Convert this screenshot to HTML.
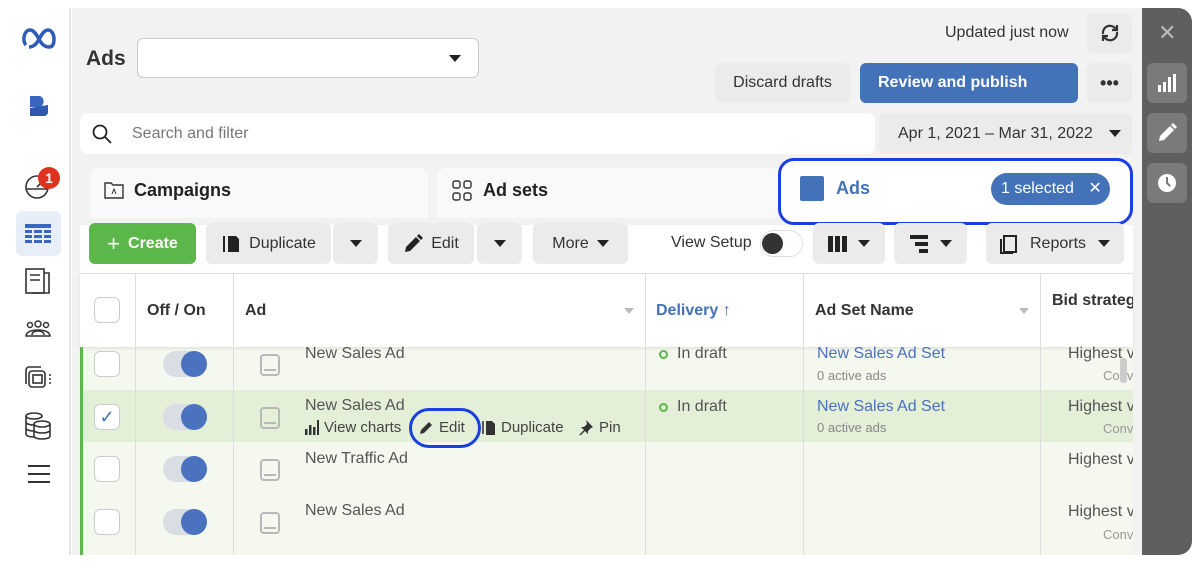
<!DOCTYPE html>
<html><head><style>
*{box-sizing:border-box;margin:0;padding:0}
body{width:1200px;height:572px;background:#fff;font-family:"Liberation Sans",sans-serif;color:#1c1e21;position:relative;overflow:hidden;font-size:15px}
.a{position:absolute;white-space:nowrap}
.btn{position:absolute;background:#ebebeb;border-radius:6px;display:flex;align-items:center;justify-content:center;font-size:16px;color:#333;white-space:nowrap}
.tri{display:inline-block;width:0;height:0;border-left:6px solid transparent;border-right:6px solid transparent;border-top:7px solid #222}
.cb{position:absolute;left:94px;width:26px;height:26px;border:1px solid #ccc;border-radius:6px;background:#fff}
.tg{position:absolute;left:163px;width:44px;height:26px;border-radius:13px;background:#d8dee3}
.tg:after{content:"";position:absolute;right:0;top:0;width:26px;height:26px;border-radius:50%;background:#4a72bf}
.ph{position:absolute;left:260px;width:20px;height:22px;border:2px solid #b8b8b8;border-radius:4px}
.ph:after{content:"";position:absolute;left:2px;right:2px;bottom:3px;height:2px;background:#b8b8b8}
.t{position:absolute;font-size:16px;color:#555;white-space:nowrap}
.lk{position:absolute;font-size:16px;color:#4a72bf;white-space:nowrap}
.sm{position:absolute;font-size:13px;color:#888;white-space:nowrap}
.vl{position:absolute;width:1px;background:#ddd}
</style></head><body>
<div class="a" style="left:10px;top:8px;width:61px;height:547px;background:#fff;border-right:2px solid #e4e4e4"></div>
<svg class="a" style="left:22px;top:27px" width="34" height="22" viewBox="0 0 34 22"><path d="M4 18C0 14 2 3 8 3c5 0 8 8 10 11 3 5 6 6 9 6 4 0 5-4 5-8S30 3 26 3c-5 0-8 8-10 11-3 5-6 6-9 6" fill="none" stroke="#2e5bb8" stroke-width="3.5"/></svg>
<svg class="a" style="left:27px;top:94px" width="24" height="24"><path d="M3 2h10a6 6 0 0 1 0 11H3z" fill="#3a66c0"/><path d="M3 14l18-3v7a4 4 0 0 1-4 4H3z" fill="#2f58b0"/></svg>
<svg class="a" style="left:24px;top:172px" width="26" height="28" fill="none" stroke="#333" stroke-width="1.6"><circle cx="13" cy="15" r="11"/><path d="M3 17h20M13 15l5-5"/></svg>
<div class="a" style="left:38px;top:167px;width:22px;height:22px;border-radius:50%;background:#e0301e;color:#fff;font-size:14px;font-weight:bold;text-align:center;line-height:22px">1</div>
<div class="a" style="left:16px;top:211px;width:45px;height:45px;border-radius:6px;background:#e8eef8"></div>
<svg class="a" style="left:25px;top:224px" width="26" height="20" fill="#3a66c0"><rect x="0" y="0" width="26" height="4"/><rect x="0" y="6" width="7" height="3"/><rect x="9" y="6" width="8" height="3"/><rect x="19" y="6" width="7" height="3"/><rect x="0" y="11" width="7" height="3"/><rect x="9" y="11" width="8" height="3"/><rect x="19" y="11" width="7" height="3"/><rect x="0" y="16" width="7" height="3"/><rect x="9" y="16" width="8" height="3"/><rect x="19" y="16" width="7" height="3"/></svg>
<svg class="a" style="left:24px;top:267px" width="28" height="28" fill="none" stroke="#333" stroke-width="1.6"><rect x="2" y="2" width="18" height="24"/><path d="M6 8h10M6 13h10M20 6h5v20H8"/></svg>
<svg class="a" style="left:23px;top:318px" width="30" height="22" fill="none" stroke="#333" stroke-width="1.5"><circle cx="15" cy="6" r="3"/><circle cx="7" cy="7" r="2.5"/><circle cx="23" cy="7" r="2.5"/><path d="M3 18c0-5 8-6 12-6s12 1 12 6zM9 17c0-3 3-4 6-4s6 1 6 4"/></svg>
<svg class="a" style="left:23px;top:364px" width="30" height="28" fill="none" stroke="#333" stroke-width="1.6"><rect x="6" y="7" width="16" height="16" rx="3"/><rect x="10" y="11" width="9" height="8"/><path d="M3 20V6a3 3 0 0 1 3-3h12M26 11h2M26 15h2M26 19h2"/></svg>
<svg class="a" style="left:24px;top:412px" width="28" height="28" fill="none" stroke="#333" stroke-width="1.6"><ellipse cx="10" cy="4" rx="8" ry="3"/><path d="M2 4v18c0 2 4 3 8 3M2 10c0 2 4 3 8 3M2 16c0 2 4 3 8 3"/><ellipse cx="18" cy="12" rx="8" ry="3"/><path d="M10 12v12c0 2 4 3 8 3s8-1 8-3V12M10 18c0 2 4 3 8 3s8-1 8-3"/></svg>
<div class="a" style="left:28px;top:465px;width:22px;height:2px;background:#333;box-shadow:0 8px 0 #333,0 16px 0 #333"></div>
<div class="a" style="left:72px;top:8px;width:1070px;height:547px;background:#f2f2f2"></div>
<div class="a" style="left:1142px;top:8px;width:50px;height:547px;background:#5f5f5f;border-radius:0 14px 14px 0"></div>
<div class="a" style="left:1158px;top:20px;color:#bbb;font-size:22px">✕</div>
<div class="a" style="left:1147px;top:63px;width:40px;height:40px;border-radius:6px;background:#7a7a7a"></div>
<svg class="a" style="left:1157px;top:73px" width="20" height="20" fill="#fff"><rect x="1" y="12" width="3" height="7"/><rect x="6" y="9" width="3" height="10"/><rect x="11" y="4" width="3" height="15"/><rect x="16" y="1" width="3" height="18"/></svg>
<div class="a" style="left:1147px;top:113px;width:40px;height:40px;border-radius:6px;background:#7a7a7a"></div>
<svg class="a" style="left:1157px;top:123px" width="20" height="20" fill="#fff"><path d="M2 18l1-5L13 3l4 4L7 17z"/><path d="M14 2l2-2 4 4-2 2z"/></svg>
<div class="a" style="left:1147px;top:163px;width:40px;height:40px;border-radius:6px;background:#7a7a7a"></div>
<svg class="a" style="left:1157px;top:173px" width="20" height="20"><circle cx="10" cy="10" r="9" fill="#fff"/><path d="M10 4v6l3 3" stroke="#7a7a7a" stroke-width="2" fill="none"/></svg>
<div class="a" style="left:86px;top:47px;font-size:21px;font-weight:bold;color:#333">Ads</div>
<div class="a" style="left:137px;top:38px;width:342px;height:40px;background:#fff;border:1px solid #ccc;border-radius:6px"></div>
<div class="a tri" style="left:449px;top:55px"></div>
<div class="a" style="left:945px;top:24px;font-size:16px;color:#333">Updated just now</div>
<div class="btn" style="left:1087px;top:13px;width:45px;height:40px"><svg width="22" height="22" fill="none" stroke="#333" stroke-width="2.2"><path d="M4 12a7 7 0 0 1 12-6l2 2M18 10a7 7 0 0 1-12 6l-2-2"/><path d="M18 3v5h-5M4 19v-5h5"/></svg></div>
<div class="btn" style="left:715px;top:63px;width:135px;height:40px">Discard drafts</div>
<div class="btn" style="left:860px;top:63px;width:218px;height:40px;background:#4472b8;color:#fff;font-weight:bold;justify-content:flex-start;padding-left:18px">Review and publish</div>
<div class="btn" style="left:1087px;top:63px;width:45px;height:40px;font-weight:bold;font-size:18px">•••</div>
<div class="a" style="left:80px;top:113px;width:795px;height:41px;background:#fff;border-radius:8px"></div>
<svg class="a" style="left:92px;top:124px" width="20" height="20" fill="none" stroke="#222" stroke-width="1.8"><circle cx="8" cy="8" r="6.5"/><path d="M13 13l6 6"/></svg>
<div class="a" style="left:132px;top:125px;font-size:16px;color:#777">Search and filter</div>
<div class="btn" style="left:879px;top:113px;width:253px;height:41px;justify-content:flex-start;padding-left:19px">Apr 1, 2021 – Mar 31, 2022<span class="tri" style="margin-left:16px"></span></div>
<div class="a" style="left:90px;top:168px;width:338px;height:50px;background:#f8f9fb;border-radius:8px 8px 0 0"></div>
<svg class="a" style="left:104px;top:181px" width="20" height="18" fill="none" stroke="#333" stroke-width="1.4"><path d="M1 2h6l2 2h10v13H1z"/><path d="M8 13l2-5 2 5" stroke-width="1"/></svg>
<div class="a" style="left:134px;top:180px;font-size:18px;font-weight:bold;color:#222">Campaigns</div>
<div class="a" style="left:437px;top:168px;width:350px;height:50px;background:#f8f9fb;border-radius:8px 8px 0 0"></div>
<svg class="a" style="left:452px;top:180px" width="20" height="22" fill="none" stroke="#333" stroke-width="1.4"><rect x="1" y="1" width="7" height="7" rx="2"/><rect x="12" y="1" width="7" height="7" rx="2"/><rect x="1" y="13" width="7" height="7" rx="2"/><rect x="12" y="13" width="7" height="7" rx="2"/></svg>
<div class="a" style="left:483px;top:180px;font-size:18px;font-weight:bold;color:#222">Ad sets</div>
<div class="a" style="left:778px;top:158px;width:355px;height:67px;background:#fff;border:3px solid #1a3fe0;border-radius:16px"></div>
<div class="a" style="left:800px;top:176px;width:24px;height:25px;background:#4472b8;border-radius:2px"></div>
<div class="a" style="left:836px;top:178px;font-size:18px;font-weight:bold;color:#4472b8">Ads</div>
<div class="a" style="left:991px;top:173px;width:119px;height:32px;border-radius:16px;background:#4472b8;color:#fff;font-size:16px;line-height:32px;padding-left:10px">1 selected <span style="margin-left:10px">✕</span></div>
<div class="a" style="left:80px;top:225px;width:1053px;height:48px;background:#fff"></div>
<div class="btn" style="left:89px;top:223px;width:107px;height:41px;background:#5bb74a;color:#fff;font-weight:bold"><span style="font-size:22px;font-weight:normal;margin-right:8px">+</span>Create</div>
<div class="btn" style="left:206px;top:223px;width:125px;height:41px"><svg width="20" height="20" style="margin-right:8px"><path d="M3 2v16" stroke="#222" stroke-width="2" fill="none"/><path d="M7 2h8l3 3v13H7z" fill="#222"/></svg>Duplicate</div>
<div class="btn" style="left:333px;top:223px;width:45px;height:41px"><span class="tri"></span></div>
<div class="btn" style="left:388px;top:223px;width:86px;height:41px"><svg width="20" height="20" style="margin-right:8px" fill="#222"><path d="M2 18l1-5L13 3l4 4L7 17z"/><path d="M14 2l2-2 4 4-2 2z"/></svg>Edit</div>
<div class="btn" style="left:477px;top:223px;width:45px;height:41px"><span class="tri"></span></div>
<div class="btn" style="left:533px;top:223px;width:95px;height:41px">More<span class="tri" style="margin-left:8px"></span></div>
<div class="a" style="left:671px;top:234px;font-size:16px;color:#333">View Setup</div>
<div class="a" style="left:760px;top:230px;width:43px;height:27px;border-radius:14px;border:1px solid #ddd;background:#fff"></div>
<div class="a" style="left:762px;top:233px;width:21px;height:21px;border-radius:50%;background:#333"></div>
<div class="btn" style="left:813px;top:223px;width:72px;height:41px"><svg width="20" height="16" style="margin-right:10px" fill="#222"><rect x="0" width="5" height="16"/><rect x="7" width="5" height="16"/><rect x="14" width="5" height="16"/></svg><span class="tri"></span></div>
<div class="btn" style="left:894px;top:223px;width:73px;height:41px"><svg width="20" height="18" style="margin-right:10px" fill="#222"><rect x="0" width="18" height="4"/><rect x="5" y="7" width="13" height="4"/><rect x="9" y="14" width="9" height="4"/></svg><span class="tri"></span></div>
<div class="btn" style="left:986px;top:223px;width:138px;height:41px"><svg width="20" height="20" style="margin-right:10px" fill="none" stroke="#222" stroke-width="2"><rect x="4" y="2" width="12" height="16"/><path d="M1 5v14h12"/></svg>Reports<span class="tri" style="margin-left:12px"></span></div>
<div class="a" style="left:80px;top:273px;width:1053px;height:282px;background:#f5f8ee"></div>
<div class="a" style="left:80px;top:273px;width:1053px;height:74px;background:#fff;border-top:1px solid #ddd;box-shadow:0 2px 3px rgba(0,0,0,.08)"></div>
<div class="a" style="left:80px;top:390px;width:1053px;height:52px;background:#e3efd6"></div>
<div class="a" style="left:80px;top:347px;width:3px;height:208px;background:#5bb74a"></div>
<div class="vl" style="left:135px;top:273px;height:282px"></div>
<div class="vl" style="left:233px;top:273px;height:282px"></div>
<div class="vl" style="left:645px;top:273px;height:282px"></div>
<div class="vl" style="left:803px;top:273px;height:282px"></div>
<div class="vl" style="left:1040px;top:273px;height:282px"></div>
<div class="cb" style="top:297px"></div>
<div class="a" style="left:147px;top:302px;font-size:16px;font-weight:bold;color:#333">Off / On</div>
<div class="a" style="left:245px;top:302px;font-size:16px;font-weight:bold;color:#333">Ad</div>
<div class="a tri" style="left:624px;top:308px;border-top-color:#bbb;border-width:6px 5px 0"></div>
<div class="a" style="left:656px;top:302px;font-size:16px;font-weight:bold;color:#4472b8">Delivery ↑</div>
<div class="a" style="left:815px;top:302px;font-size:16px;font-weight:bold;color:#333">Ad Set Name</div>
<div class="a tri" style="left:1019px;top:308px;border-top-color:#bbb;border-width:6px 5px 0"></div>
<div class="a" style="left:1052px;top:292px;font-size:16px;font-weight:bold;color:#333;width:81px;overflow:hidden">Bid strategy</div>
<div class="cb" style="top:351px"></div><div class="tg" style="top:351px"></div><div class="ph" style="top:354px"></div>
<div class="t" style="left:305px;top:345px">New Sales Ad</div>
<div class="cb" style="top:404px;color:#4472b8;font-size:18px;text-align:center;line-height:24px">✓</div><div class="tg" style="top:404px"></div><div class="ph" style="top:407px"></div>
<div class="t" style="left:305px;top:397px">New Sales Ad</div>
<svg class="a" style="left:305px;top:420px" width="14" height="15" fill="#333"><rect x="0" y="9" width="2.5" height="6"/><rect x="4" y="5" width="2.5" height="10"/><rect x="8" y="7" width="2.5" height="8"/><rect x="12" y="0" width="2.5" height="15"/></svg>
<div class="a" style="left:324px;top:419px;font-size:15px;color:#444">View charts</div>
<div class="a" style="left:409px;top:408px;width:72px;height:40px;border:3px solid #1a3fe0;border-radius:20px"></div>
<svg class="a" style="left:419px;top:420px" width="15" height="15" fill="#333"><path d="M1 14l1-4L10 2l3 3-8 8z"/></svg>
<div class="a" style="left:439px;top:419px;font-size:15px;color:#444">Edit</div>
<svg class="a" style="left:482px;top:420px" width="14" height="15" fill="#333"><path d="M1 1v13" stroke="#333" stroke-width="1.6"/><path d="M4 1h6l3 3v11H4z"/></svg>
<div class="a" style="left:501px;top:419px;font-size:15px;color:#444">Duplicate</div>
<svg class="a" style="left:578px;top:420px" width="15" height="15" fill="#333"><path d="M8 0l7 7-2 1-3 3 0 3-3-3-5 5-1-1 5-5-3-3h3l3-3z"/></svg>
<div class="a" style="left:599px;top:419px;font-size:15px;color:#444">Pin</div>
<div class="cb" style="top:456px"></div><div class="tg" style="top:456px"></div><div class="ph" style="top:459px"></div>
<div class="t" style="left:305px;top:450px">New Traffic Ad</div>
<div class="cb" style="top:509px"></div><div class="tg" style="top:509px"></div><div class="ph" style="top:512px"></div>
<div class="t" style="left:305px;top:502px">New Sales Ad</div>
<div class="a" style="left:659px;top:350px;width:9px;height:9px;border:2px solid #5bb74a;border-radius:50%"></div>
<div class="t" style="left:677px;top:345px">In draft</div>
<div class="a" style="left:659px;top:403px;width:9px;height:9px;border:2px solid #5bb74a;border-radius:50%"></div>
<div class="t" style="left:677px;top:398px">In draft</div>
<div class="lk" style="left:817px;top:345px">New Sales Ad Set</div><div class="sm" style="left:817px;top:368px">0 active ads</div>
<div class="lk" style="left:817px;top:398px">New Sales Ad Set</div><div class="sm" style="left:817px;top:420px">0 active ads</div>
<div class="a" style="left:1068px;top:345px;width:65px;height:210px;overflow:hidden;font-size:16px;color:#555">
<div class="a" style="left:0;top:0">Highest v</div><div class="a" style="left:35px;top:23px;font-size:13px;color:#999">Conv</div>
<div class="a" style="left:0;top:53px">Highest v</div><div class="a" style="left:35px;top:76px;font-size:13px;color:#999">Conv</div>
<div class="a" style="left:0;top:106px">Highest v</div>
<div class="a" style="left:0;top:158px">Highest v</div><div class="a" style="left:35px;top:182px;font-size:13px;color:#999">Conv</div>
</div>
<div class="a" style="left:1120px;top:358px;width:7px;height:25px;border-radius:3px;background:#ccc"></div>
</body></html>
